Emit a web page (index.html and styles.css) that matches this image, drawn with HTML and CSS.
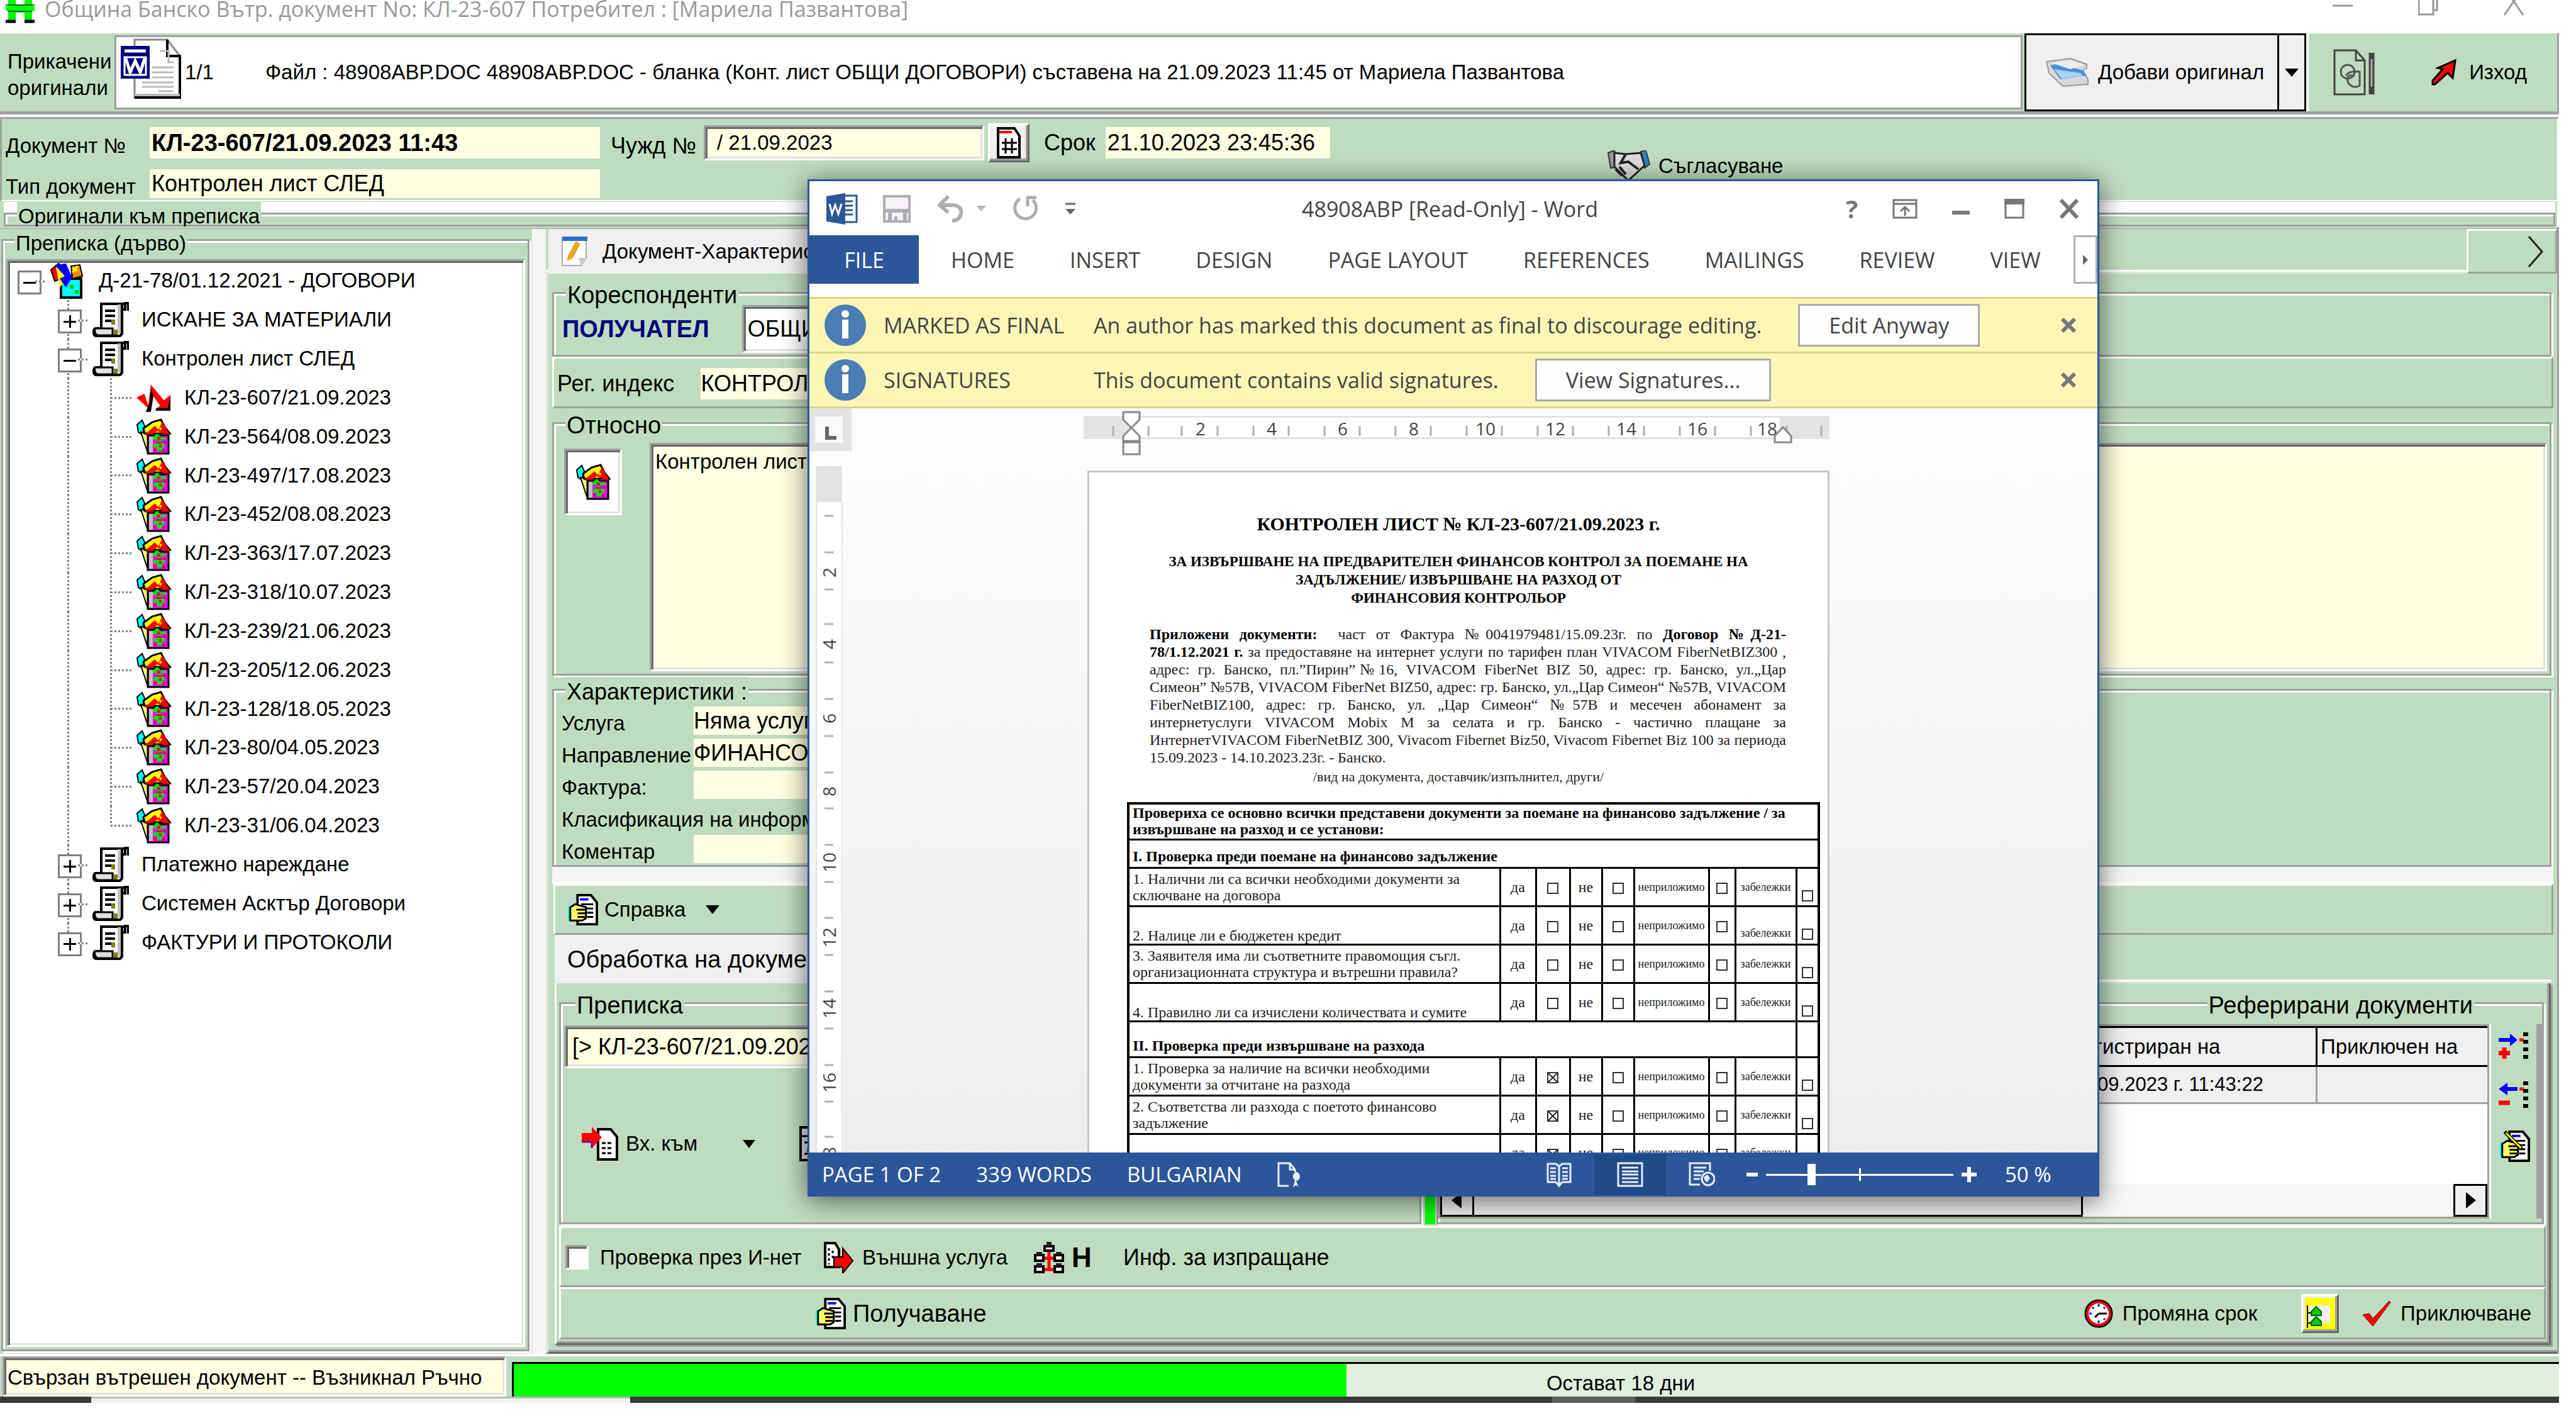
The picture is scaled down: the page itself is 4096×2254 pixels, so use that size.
FILE: index.html
```html
<!DOCTYPE html>
<html lang="bg">
<head>
<meta charset="utf-8">
<title>Община Банско</title>
<link rel="stylesheet" href="styles.css">
</head>
<body>
<svg class="defs" aria-hidden="true">
  <symbol id="scroll" viewBox="0 0 58 56">
    <path d="M14 3H52V12H46V50Q46 54 42 54H6Q2 54 2 48T6 42H14Z" fill="#fff" stroke="#000" stroke-width="4"/>
    <path d="M40 4H46V50H40Z" fill="#c0c0c0"/><path d="M47 4V52M50 2H57V14" fill="none" stroke="#000" stroke-width="4"/>
    <path d="M20 14H36M20 22H36M20 30H30" stroke="#000" stroke-width="4"/><path d="M30 28H36V36H30ZM34 44H40V52H34Z" fill="#808000"/>
    <path d="M4 42H32V53H8Q2 50 4 42Z" fill="#e0e0e0" stroke="#000" stroke-width="3"/>
  </symbol>
  <symbol id="house" viewBox="0 0 56 58">
    <path d="M2 10L10 3L14 12L10 26L4 22Z" fill="#00ffff" stroke="#000" stroke-width="2"/>
    <path d="M8 22L18 52H24V26Z" fill="#ffff80" stroke="#000" stroke-width="2"/>
    <path d="M12 16L26 6L40 2L46 14L54 24H14Z" fill="#ffff00" stroke="#000" stroke-width="3"/>
    <path d="M14 26L30 12L36 18L42 6L54 26H46L34 20L22 28Z" fill="#ff0000"/><path d="M30 10L34 6L36 12ZM38 14L42 16L38 20Z" fill="#ffff00"/>
    <path d="M19 27H52V56H19Z" fill="#ff00ff" stroke="#000" stroke-width="3"/>
    <path d="M21 29H27V54H21Z" fill="#c0c0c0"/><path d="M27 30L34 24L40 30H48V34H40V40H46V46H42V52H34V46H28V40H34V34H27Z" fill="#00e000"/>
    <path d="M34 30H39V35H34ZM33 37H41V40H33ZM37 42H41V46H37ZM42 49H46V53H42ZM44 36H48V40H44ZM28 48H32V52H28Z" fill="#e00040"/>
  </symbol>
  <symbol id="handdoc" viewBox="0 0 52 52">
    <path d="M20 2H40L50 14V50H18V2Z" fill="#fff" stroke="#000" stroke-width="4"/>
    <path d="M22 9H36" stroke="#0000ff" stroke-width="4"/><path d="M24 17H44M24 24H44M34 31H44M34 38H44" stroke="#000" stroke-width="3"/>
    <path d="M2 20V44H5V20Z" fill="#00ffff"/><path d="M6 22L14 17L32 22V40L26 44H6Z" fill="#ffff66" stroke="#000" stroke-width="3"/>
    <path d="M16 26H32M18 32H32M18 38H30" stroke="#000" stroke-width="3"/>
  </symbol>
</svg>

<div class="app">
  <header class="titlebar">
    <svg class="i" width="46" height="38" viewBox="0 0 46 38"><path d="M4 0H16V8H30V0H42V10H46V18H42V34H30V20H16V34H4V18H0V10H4Z" fill="#00ff00"/><path d="M0 8H46M4 18H42" stroke="#063" stroke-width="2"/><path d="M0 34H16M30 34H46" stroke="#000" stroke-width="5"/></svg>
    <h1>Община Банско Вътр. документ No: КЛ-23-607 Потребител : [Мариела Пазвантова]</h1>
    <button class="plain" aria-label="Минимизирай"><svg width="32" height="26" viewBox="0 0 32 26"><path d="M0 9H32" stroke="#999" stroke-width="3"/></svg></button>
    <button class="plain" aria-label="Възстанови"><svg width="32" height="26" viewBox="0 0 32 26"><path d="M1 0V23H24V0M24 16H30V0" fill="none" stroke="#999" stroke-width="3"/></svg></button>
    <button class="plain" aria-label="Затвори"><svg width="32" height="26" viewBox="0 0 32 26"><path d="M1 24L23 -8M31 24L9 -8" stroke="#999" stroke-width="3"/></svg></button>
  </header>

  <div class="toolbar">
    <div class="cap2">Прикачени<br>оригинали</div>
    <div class="filebox">
      <svg width="98" height="98" viewBox="0 0 98 98"><path d="M22 2H74L94 28V94H22Z" fill="#fff" stroke="#888" stroke-width="3"/><path d="M74 2V28H94V94H22" fill="none" stroke="#000" stroke-width="4"/><path d="M22 90H94" stroke="#bbb" stroke-width="4"/><path d="M62 20H76V38H84M50 46H84M50 54H84M50 62H84M34 70H84M34 77H84M60 84H84" stroke="#bbb" stroke-width="3" fill="none"/><path d="M0 12H46V64H0Z" fill="#000080"/><path d="M6 20H40" stroke="#fff" stroke-width="5"/><path d="M6 30H40V58H6Z" fill="none" stroke="#fff" stroke-width="3"/><path d="M8 32L15 54L23 36L31 54L38 32" fill="none" stroke="#fff" stroke-width="5"/></svg>
      <span class="count">1/1</span>
      <span>Файл : 48908АВР.DOC 48908АВР.DOC - бланка (Конт. лист ОБЩИ ДОГОВОРИ) съставена на 21.09.2023 11:45 от Мариела Пазвантова</span>
    </div>
    <div class="split">
      <button class="add"><svg width="70" height="46" viewBox="0 0 70 46"><path d="M2 6L40 1L66 10V16L60 20L68 34V42L28 45L6 24Z" fill="#d8d8d8" stroke="#999" stroke-width="2"/><path d="M8 12L20 9L60 20L66 28L24 34Z" fill="#4a90d9"/><path d="M14 18L56 24L60 29L26 33Z" fill="#a8d0f4"/><path d="M10 8L40 4L62 11L40 18Z" fill="#eee"/></svg>Добави оригинал</button>
      <button class="drop" aria-label="Още"><svg width="22" height="13" viewBox="0 0 22 13"><path d="M0 0H22L11 13Z"/></svg></button>
    </div>
    <div class="exitbox">
      <button class="plain" aria-label="Подпис"><svg width="68" height="74" viewBox="0 0 68 74"><path d="M2 2H36L50 18V72H2Z" fill="none" stroke="#444" stroke-width="3"/><path d="M36 2V18H50" fill="none" stroke="#444" stroke-width="3"/><circle cx="23" cy="36" r="11" fill="none" stroke="#555" stroke-width="3"/><path d="M20 42Q26 34 42 36V58Q32 64 24 54Q20 44 26 42H34" fill="none" stroke="#555" stroke-width="3"/><path d="M61 6V72" stroke="#444" stroke-width="9"/><path d="M61 16V60" stroke="#aaa" stroke-width="3"/></svg></button>
      <button class="plain exit"><svg width="40" height="42" viewBox="0 0 40 42"><path d="M38 2L34 30L26 22L6 40L2 40V34L18 16L10 14Z" fill="#f00" stroke="#000" stroke-width="3"/></svg>Изход</button>
    </div>
  </div>

  <section class="docinfo">
    <div class="inforow">
      <label class="w1 low" for="dn">Документ №</label><input id="dn" class="cream bold dn" value="КЛ-23-607/21.09.2023 11:43">
      <label class="big mid low" for="fn">Чужд №</label><input id="fn" class="cream sunk fn" value="/ 21.09.2023">
      <button class="raised num" aria-label="Номер"><svg width="38" height="50" viewBox="0 0 38 50"><path d="M2 2H28L36 14V48H2Z" fill="#fff" stroke="#000" stroke-width="4"/><path d="M4 8H24" stroke="#f00" stroke-width="4"/><path d="M14 18V42M24 18V42M8 25H32M8 35H32" stroke="#000" stroke-width="3"/></svg></button>
      <label class="big" for="due">Срок</label><input id="due" class="cream big due" value="21.10.2023 23:45:36">
    </div>
    <div class="inforow second">
      <label class="w1 low" for="dt">Тип документ</label><input id="dt" class="cream big dt" value="Контролен лист СЛЕД">
      <button class="plain agree"><svg width="70" height="50" viewBox="0 0 70 50"><path d="M2 4L12 0L20 26L6 28ZM54 2L62 0L68 22L60 28Z" fill="#999" stroke="#333" stroke-width="2"/><path d="M56 4L62 2L67 22L62 24Z" fill="#28c"/><path d="M12 4L30 6L54 4L60 24L34 48L12 26Z" fill="#ddd" stroke="#222" stroke-width="3"/><path d="M30 6L22 20L34 18L50 30M14 30L24 40M20 26L30 38" fill="none" stroke="#222" stroke-width="4"/></svg>Съгласуване</button>
    </div>
  </section>
  <fieldset class="group origs"><legend>Оригинали към преписка</legend></fieldset>

  <main>
    <aside>
      <fieldset class="group treegroup"><legend>Преписка (дърво)</legend>
        <ul class="tree">
          <li><button class="c x first" aria-label="Свий">−</button><span class="c ic"><svg width="58" height="58" viewBox="0 0 58 58"><path d="M18 26H50V56H18Z" fill="#0ff" stroke="#000" stroke-width="4"/><path d="M2 12L14 2L22 8L18 26L8 30Z" fill="#f00" stroke="#000" stroke-width="2"/><path d="M10 8L28 4L30 24L16 40Z" fill="#ff0"/><path d="M34 6L48 4L52 22L36 26Z" fill="#f80" stroke="#000" stroke-width="2"/><path d="M8 4L26 2L34 20H38L26 40L16 26L24 22Z" fill="#00f"/><path d="M32 36H38V42H32ZM40 44H46V50H40Z" fill="#0c0"/><path d="M36 8L44 14M44 6L36 16" stroke="#ff0" stroke-width="3"/></svg></span>Д-21-78/01.12.2021 - ДОГОВОРИ</li>
          <li><span class="c s"></span><button class="c x v" aria-label="Разгъни">+</button><span class="c ic"><svg><use href="#scroll"/></svg></span>ИСКАНЕ ЗА МАТЕРИАЛИ</li>
          <li><span class="c s"></span><button class="c x v" aria-label="Свий">−</button><span class="c ic"><svg><use href="#scroll"/></svg></span>Контролен лист СЛЕД</li>
          <li><span class="c s"></span><span class="c v"></span><span class="c v h"></span><span class="c ic"><svg width="56" height="44" viewBox="0 0 56 44"><path d="M2 22L14 16L20 34L24 2L44 26L54 18V42H30L38 34L28 20L24 42Z" fill="#f00"/><path d="M24 8L28 18L24 44H16L22 30ZM54 20V42H32V38H50Z" fill="#000"/></svg></span>КЛ-23-607/21.09.2023</li>
          <li><span class="c s"></span><span class="c v"></span><span class="c v h"></span><span class="c ic"><svg><use href="#house"/></svg></span>КЛ-23-564/08.09.2023</li>
          <li><span class="c s"></span><span class="c v"></span><span class="c v h"></span><span class="c ic"><svg><use href="#house"/></svg></span>КЛ-23-497/17.08.2023</li>
          <li><span class="c s"></span><span class="c v"></span><span class="c v h"></span><span class="c ic"><svg><use href="#house"/></svg></span>КЛ-23-452/08.08.2023</li>
          <li><span class="c s"></span><span class="c v"></span><span class="c v h"></span><span class="c ic"><svg><use href="#house"/></svg></span>КЛ-23-363/17.07.2023</li>
          <li><span class="c s"></span><span class="c v"></span><span class="c v h"></span><span class="c ic"><svg><use href="#house"/></svg></span>КЛ-23-318/10.07.2023</li>
          <li><span class="c s"></span><span class="c v"></span><span class="c v h"></span><span class="c ic"><svg><use href="#house"/></svg></span>КЛ-23-239/21.06.2023</li>
          <li><span class="c s"></span><span class="c v"></span><span class="c v h"></span><span class="c ic"><svg><use href="#house"/></svg></span>КЛ-23-205/12.06.2023</li>
          <li><span class="c s"></span><span class="c v"></span><span class="c v h"></span><span class="c ic"><svg><use href="#house"/></svg></span>КЛ-23-128/18.05.2023</li>
          <li><span class="c s"></span><span class="c v"></span><span class="c v h"></span><span class="c ic"><svg><use href="#house"/></svg></span>КЛ-23-80/04.05.2023</li>
          <li><span class="c s"></span><span class="c v"></span><span class="c v h"></span><span class="c ic"><svg><use href="#house"/></svg></span>КЛ-23-57/20.04.2023</li>
          <li><span class="c s"></span><span class="c v"></span><span class="c v h end"></span><span class="c ic"><svg><use href="#house"/></svg></span>КЛ-23-31/06.04.2023</li>
          <li><span class="c s"></span><button class="c x v" aria-label="Разгъни">+</button><span class="c ic"><svg><use href="#scroll"/></svg></span>Платежно нареждане</li>
          <li><span class="c s"></span><button class="c x v" aria-label="Разгъни">+</button><span class="c ic"><svg><use href="#scroll"/></svg></span>Системен Асктър Договори</li>
          <li><span class="c s"></span><button class="c x v end" aria-label="Разгъни">+</button><span class="c ic"><svg><use href="#scroll"/></svg></span>ФАКТУРИ И ПРОТОКОЛИ</li>
        </ul>
      </fieldset>
    </aside>

    <div class="right">
      <div class="tabs">
        <button class="tab"><svg width="44" height="48" viewBox="0 0 44 48"><path d="M2 2H40V34L32 46H2Z" fill="#fff" stroke="#aaa" stroke-width="2"/><path d="M2 0H42V7H2Z" fill="#2a6fd0"/><path d="M24 8L30 12L18 34L10 38L12 30Z" fill="#f5a623" stroke="#c80" stroke-width="1"/><path d="M28 34H42L32 46Z" fill="#ccc"/></svg>Документ-Характеристики</button>
        <button class="next" aria-label="Напред"><svg width="26" height="50" viewBox="0 0 26 50"><path d="M2 1L23 25L2 49" fill="none" stroke="#222" stroke-width="3"/></svg></button>
      </div>
      <div class="page">
        <fieldset class="group corr"><legend>Кореспонденти</legend>
          <label class="wide bold navy" for="rc">ПОЛУЧАТЕЛ</label><input id="rc" class="sunk rc" value="ОБЩИНА">
        </fieldset>
        <div class="panel reg"><label class="big" for="rg">Рег. индекс</label><input id="rg" class="cream big rg" value="КОНТРОЛ"></div>
        <fieldset class="group about"><legend>Относно</legend>
          <div class="aboutbox">
            <button class="sunk hb" aria-label="Преписка"><svg width="56" height="58"><use href="#house"/></svg></button>
            <textarea class="cream sunk" aria-label="Относно">Контролен лист</textarea>
          </div>
        </fieldset>
        <fieldset class="group chars"><legend class="big">Характеристики :</legend>
          <div class="fr"><label for="c1">Услуга</label><input id="c1" class="cream big" value="Няма услуга"></div>
          <div class="fr"><label for="c2">Направление</label><input id="c2" class="cream big" value="ФИНАНСОВ"></div>
          <div class="fr"><label for="c3">Фактура:</label><input id="c3" class="cream big"></div>
          <div class="fr"><span>Класификация на информ</span></div>
          <div class="fr"><label for="c5">Коментар</label><input id="c5" class="cream big"></div>
        </fieldset>
        <div class="gapstrip"></div>
        <div class="panel ref"><button class="plain"><svg width="50" height="50"><use href="#handdoc"/></svg>Справка<svg class="ar" width="22" height="14" viewBox="0 0 22 14"><path d="M0 0H22L11 14Z"/></svg></button></div>
        <div class="tabs2"><button class="tab wide">Обработка на документ</button></div>
        <div class="inner">
          <div class="pair">
            <fieldset class="group prep"><legend>Преписка</legend>
              <input class="cream sunk prepin big" aria-label="Преписка" value="[&gt; КЛ-23-607/21.09.2023">
              <div class="prepbar">
                <button class="plain"><svg width="58" height="54" viewBox="0 0 58 54"><path d="M26 4H46L56 16V52H26Z" fill="#fff" stroke="#000" stroke-width="4"/><path d="M32 26H50M32 34H50M32 42H50" stroke="#000" stroke-width="3" stroke-dasharray="6 3"/><path d="M0 10H16V0L32 17L16 34V24H0Z" fill="#f00"/><path d="M0 20V24H16V34" fill="none" stroke="#808" stroke-width="3"/></svg>Вх. към<svg class="ar2" width="20" height="13" viewBox="0 0 20 13"><path d="M0 0H20L10 13Z"/></svg></button>
                <svg width="48" height="56" viewBox="0 0 48 56"><path d="M2 2H46V54H2Z" fill="#ddd" stroke="#000" stroke-width="4"/><path d="M2 16H46M8 26H20M8 44H14V36H20" fill="none" stroke="#000" stroke-width="3"/></svg>
              </div>
            </fieldset>
            <div class="splitter"></div>
            <fieldset class="group refs"><legend>Реферирани документи</legend>
              <div class="refbody">
                <div class="gridbox">
                  <table><thead><tr><th class="g1"></th><th class="g2">Регистриран на</th><th>Приключен на</th></tr></thead>
                  <tbody><tr><td></td><td>21.09.2023 г. 11:43:22</td><td></td></tr></tbody></table>
                  <div class="hscroll"><button aria-label="Наляво"><svg width="18" height="26" viewBox="0 0 18 26"><path d="M16 0V26L0 13Z"/></svg></button><span class="thumb"></span><span class="track"></span><button aria-label="Надясно"><svg width="18" height="26" viewBox="0 0 18 26"><path d="M2 0V26L18 13Z"/></svg></button></div>
                </div>
                <div class="sidebtns">
                  <button class="plain" aria-label="Добави"><svg width="48" height="44" viewBox="0 0 48 44"><path d="M0 9H18V2L30 12L18 22V15H0Z" fill="#00f"/><path d="M33 12H40" stroke="#f00" stroke-width="5"/><path d="M43 0V44" stroke="#000" stroke-width="8" stroke-dasharray="6 6"/><path d="M9 24V42M0 33H18" stroke="#f00" stroke-width="7"/></svg></button>
                  <button class="plain" aria-label="Премахни"><svg width="48" height="44" viewBox="0 0 48 44"><path d="M30 9H14V2L0 12L14 22V15H30Z" fill="#00f"/><path d="M33 12H40" stroke="#f00" stroke-width="5"/><path d="M43 0V44" stroke="#000" stroke-width="8" stroke-dasharray="6 6"/><path d="M0 34H18" stroke="#f00" stroke-width="7"/></svg></button>
                  <button class="plain" aria-label="Редактирай"><svg width="50" height="50" viewBox="0 0 52 52"><use href="#handdoc"/><path d="M10 2L38 30" stroke="#000" stroke-width="6"/><path d="M12 4L37 29" stroke="#ff0" stroke-width="3"/></svg></button>
                </div>
              </div>
            </fieldset>
          </div>
          <div class="panel checks">
            <label class="chk"><input type="checkbox">Проверка през И-нет</label>
            <button class="plain ext"><svg width="48" height="50" viewBox="0 0 48 50"><path d="M2 2H18L24 12V40H2Z" fill="#fff" stroke="#000" stroke-width="4"/><path d="M8 10V36M14 14V30" stroke="#000" stroke-width="3" stroke-dasharray="4 4"/><path d="M16 24H30V10L46 30L30 50V40H16Z" fill="#f00" stroke="#000" stroke-width="2"/></svg>Външна услуга</button>
            <button class="plain net"><svg width="48" height="50" viewBox="0 0 48 50"><path d="M24 14V46M10 26H38M10 44H38" stroke="#f00" stroke-width="5"/><g fill="#fff" stroke="#000" stroke-width="4"><path d="M17 7H31V14H17ZM2 21H15V30H2ZM33 21H46V30H33ZM2 39H15V48H2ZM33 39H46V48H33Z"/></g><path d="M20 0H28V6H20ZM4 16H13V20H4ZM35 16H44V20H35ZM4 34H13V38H4ZM35 34H44V38H35Z" fill="#222"/></svg>Н</button>
            <span class="big">Инф. за изпращане</span>
          </div>
          <div class="panel finish">
            <button class="plain wide recv"><svg width="50" height="52"><use href="#handdoc"/></svg>Получаване</button>
            <button class="plain due2"><svg width="46" height="46" viewBox="0 0 46 46"><circle cx="23" cy="23" r="20" fill="#fff" stroke="#000" stroke-width="5"/><circle cx="23" cy="23" r="18" fill="#fff" stroke="#e00" stroke-width="4"/><path d="M23 23H36M23 23L17 29" stroke="#000" stroke-width="3"/><path d="M23 8V12M23 34V38M8 23H12M13 13L15 15M33 13L31 15M33 33L31 31" stroke="#00f" stroke-width="3"/></svg>Промяна срок</button>
            <button class="raised yel" aria-label="Структура"><svg width="48" height="50" viewBox="0 0 48 50"><path d="M0 0H48V50H0Z" fill="#ff0"/><path d="M6 12H40V40H6Z" fill="#efefef"/><path d="M4 12V48M4 24H14M4 40H14" fill="none" stroke="#000" stroke-width="2"/><path d="M10 22L18 14L26 22V28H10ZM10 38L18 30L26 38V44H10Z" fill="#0c0" stroke="#060" stroke-width="2"/></svg></button>
            <button class="plain fin"><svg width="48" height="40" viewBox="0 0 48 40"><path d="M2 22L12 20L18 28L44 0L46 2L18 40Z" fill="#f00" stroke="#600" stroke-width="1"/></svg>Приключване</button>
          </div>
        </div>
      </div>
    </div>
  </main>

  <footer class="status">
    <div class="msg sunk cream">Свързан вътрешен документ -- Възникнал Ръчно</div>
    <div class="prog"><div class="done"></div><span>Остават 18 дни</span></div>
  </footer>
  <div class="taskbar"><i class="t1"></i><i class="t2"></i></div>
</div>

<section class="word">
  <header class="wtitle">
    <svg width="50" height="50" viewBox="0 0 50 50"><path d="M26 4H48V46H26Z" fill="#fff" stroke="#2b579a" stroke-width="3"/><path d="M30 13H42M30 20H42M30 27H42M30 34H42" stroke="#2b579a" stroke-width="3"/><path d="M0 5L30 0V50L0 45Z" fill="#2b579a"/><path d="M5 17L9 33L14 19L19 33L24 17" fill="none" stroke="#fff" stroke-width="3"/></svg>
    <button class="plain sv" aria-label="Save"><svg width="44" height="44" viewBox="0 0 44 44"><path d="M2 2H42V42H2Z" fill="#f6f2f8" stroke="#b0adb2" stroke-width="4"/><path d="M2 22H42V28H2ZM8 28H14V42H8ZM32 28H38V42H32ZM18 34H23V42H18Z" fill="#b0adb2"/></svg></button>
    <button class="plain un" aria-label="Undo"><svg width="78" height="44" viewBox="0 0 78 44"><path d="M4 16H26Q40 18 38 30Q36 40 24 41M18 2L4 16L18 28" fill="none" stroke="#b0adb2" stroke-width="6"/><path d="M62 17H78L70 26Z" fill="#b8b8b8"/></svg></button>
    <button class="plain re" aria-label="Repeat"><svg width="42" height="44" viewBox="0 0 42 44"><path d="M12 6A17 17 0 1 0 32 8M22 4H38M24 4V18" fill="none" stroke="#b0adb2" stroke-width="5"/></svg></button>
    <button class="plain qa" aria-label="Customize"><svg width="16" height="20" viewBox="0 0 16 20"><path d="M0 2H16" stroke="#666" stroke-width="3"/><path d="M0 10H16L8 19Z" fill="#666"/></svg></button>
    <h2>48908АВР [Read-Only] - Word</h2>
    <div class="wbtns">
      <button class="plain q" aria-label="Help">?</button>
      <button class="plain" aria-label="Ribbon options"><svg width="40" height="32" viewBox="0 0 40 32"><path d="M2 2H38V30H2ZM2 8H38M20 27V14M13 20L20 13L27 20" fill="none" stroke="#777" stroke-width="3"/></svg></button>
      <button class="plain" aria-label="Minimize"><svg width="28" height="32" viewBox="0 0 28 32"><path d="M0 22H28" stroke="#777" stroke-width="6"/></svg></button>
      <button class="plain" aria-label="Maximize"><svg width="32" height="32" viewBox="0 0 32 32"><path d="M2 2H30V30H2Z" fill="none" stroke="#777" stroke-width="3"/><path d="M0 0H32V9H0Z" fill="#777"/></svg></button>
      <button class="plain" aria-label="Close"><svg width="32" height="32" viewBox="0 0 32 32"><path d="M3 2L29 30M29 2L3 30" stroke="#777" stroke-width="6"/></svg></button>
    </div>
  </header>
  <nav class="ribbon">
    <button class="file">FILE</button><button>HOME</button><button>INSERT</button><button>DESIGN</button><button>PAGE LAYOUT</button><button>REFERENCES</button><button>MAILINGS</button><button>REVIEW</button><button class="last">VIEW</button>
    <button class="more" aria-label="More"><svg width="8" height="16" viewBox="0 0 8 16"><path d="M0 0L8 8L0 16Z" fill="#666"/></svg></button>
  </nav>
  <div class="bar"><svg width="66" height="66" viewBox="0 0 66 66"><circle cx="33" cy="33" r="33" fill="#4a7eb5"/><circle cx="33" cy="15" r="6" fill="#fff"/><path d="M33 24V54" stroke="#fff" stroke-width="10"/></svg><b>MARKED AS FINAL</b><span>An author has marked this document as final to discourage editing.</span><button class="wb">Edit Anyway</button><button class="plain xx" aria-label="Close"><svg width="24" height="24" viewBox="0 0 24 24"><path d="M2 2L22 22M22 2L2 22" stroke="#777" stroke-width="6"/></svg></button></div>
  <div class="bar"><svg width="66" height="66" viewBox="0 0 66 66"><circle cx="33" cy="33" r="33" fill="#4a7eb5"/><circle cx="33" cy="15" r="6" fill="#fff"/><path d="M33 24V54" stroke="#fff" stroke-width="10"/></svg><b>SIGNATURES</b><span>This document contains valid signatures.</span><button class="wb">View Signatures...</button><button class="plain xx" aria-label="Close"><svg width="24" height="24" viewBox="0 0 24 24"><path d="M2 2L22 22M22 2L2 22" stroke="#777" stroke-width="6"/></svg></button></div>
  <div class="canvas">
    <div class="vcol">
      <button class="tabsel" aria-label="Tab"><svg width="44" height="42" viewBox="0 0 44 42"><path d="M0 0H44V42H0Z" fill="#fafafa"/><path d="M19 16V34H34" fill="none" stroke="#666" stroke-width="6"/></svg></button>
      <svg class="vr" width="44" height="1092" viewBox="0 0 44 1092"><path d="M0 0H44V1092H0Z" fill="#fff"/><path d="M0 0H42V57H0Z" fill="#e3e3e3"/><path d="M1 57V1092M42 57V1092" stroke="#e3e3e3" stroke-width="2"/>
        <path d="M14 79H28M14 137H28M14 196H28M14 251H28M14 312H28M14 370H28M14 429H28M14 487H28M14 544H28M14 602H28M14 661H28M14 718H28M14 777H28M14 835H28M14 894H28M14 952H28M14 1010H28M14 1066H28" stroke="#b0b0b0" stroke-width="3"/>
        <g font-size="28" font-family="Open Sans, sans-serif" fill="#444" text-anchor="middle"><text transform="translate(32 169) rotate(-90)">2</text><text transform="translate(32 283) rotate(-90)">4</text><text transform="translate(32 401) rotate(-90)">6</text><text transform="translate(32 517) rotate(-90)">8</text><text transform="translate(32 630) rotate(-90)">10</text><text transform="translate(32 749) rotate(-90)">12</text><text transform="translate(32 862) rotate(-90)">14</text><text transform="translate(32 980) rotate(-90)">16</text><text transform="translate(32 1098) rotate(-90)">18</text></g></svg>
    </div>
    <div class="dcol">
      <svg class="hr" width="1186" height="80" viewBox="0 0 1186 80"><path d="M0 8H1186V45H0Z" fill="#e3e3e3"/><path d="M76 11H1107V42H76Z" fill="#fff"/>
        <path d="M47 24V40M103 24V40M156 24V40M213 24V40M270 24V40M326 24V40M383 24V40M439 24V40M496 24V40M552 24V40M609 24V40M665 24V40M722 24V40M778 24V40M835 24V40M891 24V40M948 24V40M1004 24V40M1061 24V40M1118 24V40M1173 24V40" stroke="#b0b0b0" stroke-width="3"/>
        <g font-size="28" font-family="Open Sans, sans-serif" fill="#444" text-anchor="middle"><text x="186" y="39">2</text><text x="299" y="39">4</text><text x="412" y="39">6</text><text x="525" y="39">8</text><text x="639" y="39">10</text><text x="750" y="39">12</text><text x="863" y="39">14</text><text x="976" y="39">16</text><text x="1087" y="39">18</text></g>
        <path d="M63 2H89V14L76 27L63 14ZM76 27L89 40V48H63V40ZM63 50H89V69H63ZM1112 26L1125 40V50H1099V40Z" fill="#fff" stroke="#888" stroke-width="3"/></svg>
      <article class="paper">
        <h3>КОНТРОЛЕН ЛИСТ № КЛ-23-607/21.09.2023 г.</h3>
        <h4>ЗА ИЗВЪРШВАНЕ НА ПРЕДВАРИТЕЛЕН ФИНАНСОВ КОНТРОЛ ЗА ПОЕМАНЕ НА<br>ЗАДЪЛЖЕНИЕ/ ИЗВЪРШВАНЕ НА РАЗХОД ОТ<br>ФИНАНСОВИЯ КОНТРОЛЬОР</h4>
        <div class="para">
          <p><b>Приложени документи:</b>&nbsp; част от Фактура №0041979481/15.09.23г. по <b>Договор №Д-21-</b></p>
          <p><b>78/1.12.2021 г.</b> за предоставяне на интернет услуги по тарифен план VIVACOM FiberNetBIZ300 ,</p>
          <p>адрес: гр. Банско, пл.”Пирин”№16, VIVACOM FiberNet BIZ 50, адрес: гр. Банско, ул.„Цар</p>
          <p>Симеон” №57В, VIVACOM FiberNet BIZ50, адрес: гр. Банско, ул.„Цар Симеон“ №57В, VIVACOM</p>
          <p>FiberNetBIZ100, адрес: гр. Банско, ул. „Цар Симеон“ №57В и месечен абонамент за</p>
          <p>интернетуслуги VIVACOM Mobix M за селата и гр. Банско - частично плащане за</p>
          <p>ИнтернетVIVACOM FiberNetBIZ 300, Vivacom Fibernet Biz50, Vivacom Fibernet Biz 100 за периода</p>
          <p class="lastl">15.09.2023 - 14.10.2023.23г. - Банско.</p>
        </div>
        <p class="note">/вид на документа, доставчик/изпълнител, други/</p>
        <table class="ct">
          <colgroup><col class="k0"><col class="k1"><col class="k2"><col class="k3"><col class="k3"><col class="k4"><col class="k5"><col class="k6"><col class="k7"></colgroup>
          <tr class="r59"><th colspan="9">Провериха се основно всички представени документи за поемане на финансово задължение / за<br>извършване на разход и се установи:</th></tr>
          <tr class="r46"><th colspan="9" class="bot">I. Проверка преди поемане на финансово задължение</th></tr>
          <tr><td>1. Налични ли са всички необходими документи за<br>сключване на договора</td><td>да</td><td><input type="checkbox" aria-label="да"></td><td>не</td><td><input type="checkbox" aria-label="не"></td><td class="sm">неприложимо</td><td><input type="checkbox" aria-label="неприложимо"></td><td class="sm">забележки</td><td class="bot"><input type="checkbox" aria-label="забележки"></td></tr>
          <tr><td class="bot">2. Налице ли е бюджетен кредит</td><td>да</td><td><input type="checkbox" aria-label="да"></td><td>не</td><td><input type="checkbox" aria-label="не"></td><td class="sm">неприложимо</td><td><input type="checkbox" aria-label="неприложимо"></td><td class="sm bot">забележки</td><td class="bot"><input type="checkbox" aria-label="забележки"></td></tr>
          <tr><td>3. Заявителя има ли съответните правомощия съгл.<br>организационната структура и вътрешни правила?</td><td>да</td><td><input type="checkbox" aria-label="да"></td><td>не</td><td><input type="checkbox" aria-label="не"></td><td class="sm">неприложимо</td><td><input type="checkbox" aria-label="неприложимо"></td><td class="sm">забележки</td><td class="bot"><input type="checkbox" aria-label="забележки"></td></tr>
          <tr><td class="bot">4. Правилно ли са изчислени количествата и сумите</td><td>да</td><td><input type="checkbox" aria-label="да"></td><td>не</td><td><input type="checkbox" aria-label="не"></td><td class="sm">неприложимо</td><td><input type="checkbox" aria-label="неприложимо"></td><td class="sm">забележки</td><td class="bot"><input type="checkbox" aria-label="забележки"></td></tr>
          <tr class="r57"><th colspan="8" class="bot">II. Проверка преди извършване на разхода</th><td></td></tr>
          <tr><td>1. Проверка за наличие на всички необходими<br>документи за отчитане на разхода</td><td>да</td><td><input type="checkbox" checked aria-label="да"></td><td>не</td><td><input type="checkbox" aria-label="не"></td><td class="sm">неприложимо</td><td><input type="checkbox" aria-label="неприложимо"></td><td class="sm">забележки</td><td class="bot"><input type="checkbox" aria-label="забележки"></td></tr>
          <tr><td>2. Съответства ли разхода с поетото финансово<br>задължение</td><td>да</td><td><input type="checkbox" checked aria-label="да"></td><td>не</td><td><input type="checkbox" aria-label="не"></td><td class="sm">неприложимо</td><td><input type="checkbox" aria-label="неприложимо"></td><td class="sm">забележки</td><td class="bot"><input type="checkbox" aria-label="забележки"></td></tr>
          <tr><td></td><td>да</td><td><input type="checkbox" checked aria-label="да"></td><td>не</td><td><input type="checkbox" aria-label="не"></td><td class="sm">неприложимо</td><td><input type="checkbox" aria-label="неприложимо"></td><td class="sm">забележки</td><td></td></tr>
        </table>
      </article>
    </div>
  </div>
  <footer class="wstatus">
    <span>PAGE 1 OF 2</span><span>339 WORDS</span><span>BULGARIAN</span>
    <svg width="38" height="40" viewBox="0 0 38 40"><path d="M18 38H2V2H20L28 12V16M20 2V12H28" fill="none" stroke="#e4ecf7" stroke-width="3"/><path d="M30 16A6 7 0 0 1 30 30L34 40L30 37L25 40L28 29A6 7 0 0 1 30 16Z" fill="#e4ecf7"/></svg>
    <div class="views">
      <button class="plain" aria-label="Read mode"><svg width="40" height="40" viewBox="0 0 40 40"><path d="M2 3H15L20 7L25 3H38V32H25L20 38L15 32H2ZM20 7V36" fill="none" stroke="#e4ecf7" stroke-width="3"/><path d="M6 10H15M6 16H15M6 22H15M6 27H15M25 10H34M25 16H34M25 22H34M25 27H34" stroke="#e4ecf7" stroke-width="3"/></svg></button>
      <button class="plain on" aria-label="Print layout"><svg width="42" height="40" viewBox="0 0 42 40"><path d="M2 2H40V38H2ZM8 9H34M8 15H34M8 20H34M8 26H34M8 32H34" fill="none" stroke="#e4ecf7" stroke-width="3"/></svg></button>
      <button class="plain" aria-label="Web layout"><svg width="42" height="40" viewBox="0 0 42 40"><path d="M18 36H2V2H34V14M8 9H28M8 15H24M8 21H20M8 27H18" fill="none" stroke="#e4ecf7" stroke-width="3"/><circle cx="31" cy="27" r="10" fill="#2b579a" stroke="#e4ecf7" stroke-width="3"/><path d="M24 24L30 20L34 26L30 32L26 30Z" fill="#e4ecf7"/></svg></button>
    </div>
    <button class="plain zo" aria-label="Zoom out"><svg width="18" height="24" viewBox="0 0 18 24"><path d="M0 12H18" stroke="#fff" stroke-width="6"/></svg></button>
    <input type="range" class="zoom" aria-label="Zoom" value="23">
    <button class="plain zi" aria-label="Zoom in"><svg width="24" height="24" viewBox="0 0 24 24"><path d="M0 12H24M12 0V24" stroke="#fff" stroke-width="6"/></svg></button>
    <span>50 %</span>
  </footer>
</section>
</body>
</html>
```

FILE: styles.css
```css
* { box-sizing: border-box; }
body { margin: 0; min-height: 100vh; background: #fff; color: #000; font: 33px/36px "Liberation Sans", sans-serif; display: flex; position: relative; }
.defs { position: absolute; width: 0; height: 0; }
svg { display: block; flex: none; }
button, input, textarea { font: inherit; color: inherit; margin: 0; border-radius: 0; }
input, textarea { border: 0; padding: 0 3px; min-width: 0; outline: 0; }
.plain { border: 0; padding: 0; background: none; display: flex; align-items: center; white-space: nowrap; }
.big { font-size: 36px; }
.wide { font-size: 38px; }
.bold { font-weight: bold; }
.navy { color: #000080; }
.cream { background: #ffffe1; }
.sunk { border: 3px solid; border-color: #a0a0a0 #fff #fff #a0a0a0; box-shadow: inset 3px 3px #696969, inset -3px -3px #e3e3e3; }
.raised { background: #f0f0f0; border: 3px solid; border-color: #fff #696969 #696969 #fff; box-shadow: inset -3px -3px #a0a0a0; padding: 0; display: flex; align-items: center; justify-content: center; }
.app { flex: 1; min-width: 0; display: flex; flex-direction: column; padding: 0 27px 24px 0; }

.titlebar { height: 53px; display: flex; align-items: flex-start; padding-left: 9px; }
.titlebar h1 { margin: 0 auto 0 16px; font: 34px/28px "Open Sans", sans-serif; color: #999; white-space: nowrap; }
.titlebar .plain { margin-right: 56px; width: 80px; justify-content: flex-end; }

.toolbar { height: 129px; background: #c0dcc0; border-bottom: 5px solid #a0a0a0; display: flex; }
.cap2 { width: 182px; padding: 24px 0 0 12px; line-height: 42px; }
.filebox { flex: 1; margin: 3px 3px 3px 0; border: 3px solid #a0a0a0; background: #fff; display: flex; align-items: center; padding-left: 7px; white-space: nowrap; overflow: hidden; }
.filebox svg { margin-bottom: 10px; }
.filebox .count { width: 132px; padding-left: 4px; }
.split { width: 448px; border: 3px solid #000; background: #f0f0f0; display: flex; }
.split button { border: 0; background: none; padding: 0; display: flex; align-items: center; }
.split .add { flex: 1; padding-left: 30px; gap: 14px; white-space: nowrap; }
.split .drop { width: 43px; border-left: 3px solid #000; justify-content: center; }
.exitbox { width: 402px; border-right: 3px solid #a0a0a0; border-left: 4px solid #fff; display: flex; align-items: center; justify-content: space-between; padding: 0 48px 0 39px; }
.exit { gap: 20px; }

.docinfo { margin-top: 4px; border: 3px solid; border-color: #a0a0a0 transparent #fff #a0a0a0; background: #c0dcc0; background-clip: padding-box; height: 135px; padding-top: 6px; }
.inforow { display: flex; align-items: center; height: 64px; padding-left: 6px; }
.second { height: 58px; padding-top: 8px; }
.w1 { width: 229px; }
.low { padding-top: 10px; white-space: nowrap; }
.dn { width: 716px; height: 50px; font-size: 38px; }
.dt { width: 716px; height: 46px; }
.mid { width: 165px; padding-left: 17px; }
.fn { width: 446px; height: 56px; padding-left: 18px; }
.num { width: 66px; height: 62px; margin: 0 23px 0 6px; }
.due { width: 357px; height: 50px; margin-left: 16px; }
.agree { margin-left: 1601px; gap: 12px; margin-top: -56px; }

.group { min-width: 0; margin: 0; padding: 0; border: 3px solid #a0a0a0; box-shadow: 3px 3px #fff, inset 3px 3px #fff; background: #c0dcc0; }
.group legend { background: #c0dcc0; padding: 0 2px; margin-left: 18px; }
.origs { height: 37px; margin: 0 6px 3px 6px; }
.origs legend { height: 36px; line-height: 46px; }
.app > .origs { outline: 6px solid #c0dcc0; outline-offset: 0; clip-path: inset(-1px -3px -3px -6px); }

main { flex: 1; display: flex; border-top: 3px solid #a0a0a0; background: #f5f5f5; }
aside { width: 846px; background: #c0dcc0; padding: 0 4px 4px 2px; display: flex; }
.treegroup { flex: 1; display: flex; padding: 14px 4px 4px 5px; }
.treegroup legend { height: 34px; line-height: 46px; margin-left: 13px; }
.tree { list-style: none; margin: 0; padding: 0; flex: 1; background: #fff; border: 3px solid; border-color: #a0a0a0 #fff #fff #a0a0a0; box-shadow: inset 3px 3px #696969, inset -3px -3px #e3e3e3; }
.tree li { height: 62px; display: flex; align-items: center; white-space: nowrap; }
.tree li:nth-child(6n) { height: 61px; }
.c { width: 68px; height: 100%; flex: none; border: 0; padding: 0; display: flex; align-items: center; justify-content: center; background: none; }
.c.s, .c.first { width: 61px; }
.v { background: repeating-linear-gradient(#808080 0 3px, #fff 3px 6px) center / 3px 100% no-repeat; }
.v.h { background: repeating-linear-gradient(90deg, #808080 0 3px, #fff 3px 6px) right / 34px 3px no-repeat, repeating-linear-gradient(#808080 0 3px, #fff 3px 6px) center / 3px 100% no-repeat; }
.v.end { background-size: 3px 50%; background-position: top; }
.v.h.end { background-size: 34px 3px, 3px 50%; background-position: right, top; }
.x { position: relative; color: transparent; }
.x::before { content: ""; position: absolute; width: 32px; height: 32px; border: 3px solid #808080; left: calc(50% - 16px); top: calc(50% - 16px); }
.x::after { content: ""; position: absolute; width: 18px; height: 3px; background: repeating-linear-gradient(90deg, #808080 0 3px, #fff 3px 6px); right: 0; top: 50%; }
.x[aria-label="Свий"]::before { background: linear-gradient(#000, #000) center / 20px 3px no-repeat #fff; }
.x[aria-label="Разгъни"]::before { background: linear-gradient(#000, #000) center / 20px 3px no-repeat, linear-gradient(#000, #000) center / 3px 20px no-repeat #fff; }
.ic { margin-right: 15px; }
.ic svg { width: 58px; height: 58px; }

.right { flex: 1; min-width: 0; margin-left: 22px; display: flex; flex-direction: column; background: #c0dcc0; border-right: 3px solid #a0a0a0; }
.tabs { height: 71px; display: flex; justify-content: space-between; background: linear-gradient(#c0dcc0 65px, #fff 65px 68px, #e3e3e3 68px); }
.tab { border: 0; background: #f0f0f0; text-align: left; padding: 0 0 0 20px; width: 700px; margin-left: 4px; display: flex; align-items: center; gap: 22px; white-space: nowrap; }
.next { width: 144px; background: #c0dcc0; border: 3px solid; border-color: #fff #a0a0a0 #a0a0a0 #fff; padding: 0 18px 0 0; display: flex; align-items: center; justify-content: flex-end; }
.page { flex: 1; display: flex; flex-direction: column; padding: 10px 9px 6px 6px; border-left: 4px solid #e3e3e3; background: #c0dcc0; border-bottom: 3px solid #696969; box-shadow: inset 0 -3px #a0a0a0; }
.page legend { height: 40px; line-height: 48px; font-size: 38px; }
.page legend.big { font-size: 36px; }
.corr { height: 122px; display: flex; align-items: center; padding: 0 0 0 13px; }
.corr legend, .chars legend { margin-left: 6px; }
.rc { margin-left: 52px; width: 900px; height: 76px; padding-left: 6px; font-size: 36px; }
.panel { border: 3px solid; border-color: #fff #a0a0a0 #a0a0a0 #fff; background: #c0dcc0; display: flex; align-items: center; }
.reg { height: 82px; margin: 0 -3px 0 0; padding: 4px 0 0 5px; }
.rg { margin-left: 42px; width: 600px; height: 50px; padding: 0; }
.about { height: 422px; margin-top: 3px; }
.aboutbox { display: flex; height: 100%; padding: 12px 4px 3px 0; align-items: flex-start; }
.hb { width: 92px; height: 106px; margin: 9px 44px 0 16px; padding: 0; background: #fff; display: flex; align-items: center; justify-content: center; flex: none; }
.about textarea { flex: 1; height: 363px; resize: none; padding: 9px 6px; }
.chars { height: 302px; margin-top: 2px; padding: 4px 0 0 12px; }
.fr { height: 51px; display: flex; align-items: center; white-space: nowrap; }
.fr label { width: 210px; padding-top: 8px; }
.fr input { width: 900px; height: 45px; padding: 0; }
.fr span { padding-top: 8px; }
.gapstrip { height: 27px; margin: 0 -3px 0 0; background: #f5f5f5; border-bottom: 3px solid #fff; }
.ref { height: 81px; margin: 0 -3px 0 2px; padding-left: 18px; }
.ref svg:first-child { margin-right: 10px; }
.ar { margin-left: 32px; }
.tabs2 { height: 77px; display: flex; margin-left: 4px; background: linear-gradient(#c0dcc0 71px, #fff 71px 74px, #e3e3e3 74px); }
.tabs2 .tab { margin: 0; }
.inner { flex: 1; margin: 0 1px 5px 4px; padding: 11px 8px 6px 4px; border: 3px solid; border-color: transparent #696969 #696969 #fff; border-top: 0; box-shadow: 3px 3px #a0a0a0, inset -3px -3px #a0a0a0; display: flex; flex-direction: column; }
.pair { flex: 1; display: flex; min-height: 367px; }
.prep { width: 1371px; padding: 16px 0 0 5px; }
.prepin { width: 100%; height: 68px; padding: 0 10px; }
.prepbar { display: flex; align-items: center; justify-content: flex-start; padding: 92px 0 0 28px; }
.prepbar .plain > svg:first-child { margin-right: 12px; }
.ar2 { margin: 0 70px 0 72px; }
.splitter { width: 16px; margin: 20px 2px 0 6px; background: #00ff00; }
.refs { flex: 1; }
.refs legend { margin-left: auto; margin-right: 108px; }
.refbody { display: flex; height: 100%; padding: 14px 0 6px; }
.gridbox { flex: 1; display: flex; flex-direction: column; background: #fff; border: 3px solid #a0a0a0; }
.gridbox table { border-collapse: collapse; width: 100%; table-layout: fixed; border-top: 3px solid #000; }
.gridbox th, .gridbox td { height: 59px; padding: 0 5px; font-weight: normal; text-align: left; background: #f0f0f0; border: 3px solid #a0a0a0; border-width: 0 0 3px 3px; white-space: nowrap; }
.gridbox td { font-size: 31px; }
.gridbox th { border-color: #000; height: 62px; }
.gridbox .g1 { width: 994px; }
.gridbox .g2 { width: 398px; }
.hscroll { margin-top: auto; height: 52px; display: flex; background: #f7f7f7; }
.hscroll button { width: 54px; border: 3px solid #000; background: #f0f0f0; padding: 0; display: flex; align-items: center; justify-content: center; }
.thumb { width: 968px; background: #f0f0f0; border: 3px solid #000; border-left: 0; }
.track { flex: 1; }
.sidebtns { width: 84px; border-right: 9px solid #a0a0a0; border-left: 3px solid #fff; display: flex; flex-direction: column; gap: 34px; padding: 13px 0 0 12px; }
.checks { height: 98px; margin: 2px -3px 0 0; padding: 2px 0 0 7px; border-top-width: 4px; }
.chk { display: flex; align-items: center; width: 411px; white-space: nowrap; }
.chk input { appearance: none; width: 37px; height: 39px; padding: 0; margin-right: 18px; background: #fff; border: 3px solid; border-color: #a0a0a0 #fff #fff #a0a0a0; box-shadow: inset 3px 3px #696969; }
.ext { width: 334px; gap: 13px; }
.net { width: 142px; gap: 12px; font-weight: bold; font-size: 44px; }
.finish { height: 83px; margin-right: -3px; padding: 0 20px 0 403px; }
.recv { margin-right: auto; gap: 11px; }
.due2 { gap: 15px; margin-right: 70px; }
.yel { width: 60px; height: 62px; margin-right: 36px; }
.fin { gap: 14px; }

.status { height: 64px; margin-top: 4px; display: flex; background: #c0dcc0; }
.msg { width: 801px; margin-left: 4px; padding: 0 5px; line-height: 62px; white-space: nowrap; }
.prog { flex: 1; margin: 9px 0 0 9px; border: 3px solid #000; border-width: 3px 0 0 3px; background: #dfeedf; display: grid; align-items: center; justify-items: center; }
.prog > * { grid-area: 1 / 1; }
.done { background: #00ff00; width: 1324px; height: 100%; justify-self: start; }
.prog span { margin-left: 268px; line-height: 46px; padding-top: 8px; }
.taskbar { height: 10px; background: #3a3a3a; display: flex; padding-left: 145px; }
.t1 { width: 857px; background: #f2f2f2; border-top: 3px solid #bbb; }
.t2 { width: 132px; margin-left: 1466px; background: #5d5d5d; }

.word { position: absolute; left: 1284px; top: 285px; width: 2054px; height: 1617px; border: 3px solid #2b579a; border-bottom: 0; background: #fff; color: #444; font: 34px/40px "Open Sans", sans-serif; display: flex; flex-direction: column; box-shadow: 0 6px 40px rgba(0, 0, 0, .6); }
.wtitle { height: 86px; display: flex; align-items: center; padding: 2px 29px 0 27px; flex: none; }
.sv { margin-left: 40px; }
.un, .re, .qa { margin-left: 42px; }
.wtitle h2 { margin: 0 auto 0 360px; font: inherit; white-space: nowrap; }
.wbtns { display: flex; align-items: center; gap: 55px; }
.q { font-weight: bold; font-size: 40px; color: #777; }
.ribbon { display: flex; height: 77px; margin-bottom: 21px; flex: none; }
.ribbon button { flex: none; border: 0; background: none; padding: 0; margin-right: 88px; white-space: nowrap; }
.ribbon .file { width: 174px; background: #2b579a; color: #fff; margin-right: 51px; }
.ribbon .last { margin-right: 0; }
.ribbon .more { margin: 0 0 0 auto; width: 38px; border: 3px solid #b0b0b0; background: #fdfdfd; display: flex; align-items: center; justify-content: center; }
.bar { height: 87px; flex: none; background: #fcf7b6; border-top: 3px solid #d8d68a; display: flex; align-items: center; padding: 0 34px 0 24px; }
.bar b { font-weight: normal; width: 332px; padding-left: 28px; white-space: nowrap; }
.bar span { white-space: nowrap; margin-right: 58px; padding-left: 30px; }
.wb { height: 68px; padding: 0 46px; border: 3px solid #ababab; background: #fdfdfd; white-space: nowrap; }
.xx { margin-left: auto; }
.canvas { flex: 1; min-height: 0; overflow: hidden; display: flex; background: linear-gradient(#fdfdfd, #eee); border-top: 3px solid #d8d68a; }
.vcol { width: 67px; }
.tabsel { width: 67px; height: 68px; border: 0; padding: 0 0 0 9px; background: #e3e3e3; display: flex; align-items: center; }
.vr { margin: 24px 0 0 10px; }
.hr { margin: 4px 0 0 369px; }
.dcol { flex: 1; }
.paper { margin: 15px 0 0 375px; width: 1180px; background: #fff; border: 3px solid #c6c6c6; border-bottom: 0; color: #222; font: 24px/28px "Liberation Serif", serif; padding: 62px 16px 0 60px; height: 1300px; }
.paper h3 { margin: 0 0 25px -44px; text-align: center; font: bold 30px/40px "Liberation Serif", serif; color: #000; }
.paper h4 { margin: 0 0 29px -44px; text-align: center; font: bold 23px/29px "Liberation Serif", serif; color: #000; }
.para { margin: 0 50px 0 36px; }
.para p { margin: 0; text-align: justify; text-align-last: justify; white-space: nowrap; }
.para .lastl { text-align-last: left; }
.para b { color: #000; }
.note { margin: 3px 0 26px -44px; text-align: center; font-size: 22px; }
.ct { border-collapse: collapse; table-layout: fixed; width: 1098px; border: 4px solid #000; line-height: 26px; }
.ct tr { height: 61px; }
.ct .r59 { height: 57px; }
.ct .r46 { height: 45px; }
.ct .r57 { height: 57px; }
.ct th, .ct td { border: 3px solid #000; padding: 0; text-align: center; vertical-align: middle; white-space: nowrap; }
.ct th { text-align: left; padding: 0 5px; color: #000; vertical-align: top; }
.ct td:first-child { text-align: left; padding: 0 5px; }
.ct .sm { font-size: 18px; }
.ct .bot { vertical-align: bottom; padding-bottom: 4px; }
.k0 { width: 591px; } .k1 { width: 57px; } .k2 { width: 54px; } .k3 { width: 51px; } .k4 { width: 119px; } .k5 { width: 42px; } .k6 { width: 97px; } .k7 { width: 36px; }
.ct input { appearance: none; width: 18px; height: 18px; padding: 0; border: 2px solid #333; display: inline-block; vertical-align: middle; }
.ct input:checked { background: linear-gradient(45deg, transparent 44%, #333 44% 56%, transparent 56%), linear-gradient(-45deg, transparent 44%, #333 44% 56%, transparent 56%); }
.wstatus { height: 70px; flex: none; background: #2b579a; color: #fff; display: flex; align-items: center; padding-left: 20px; gap: 56px; white-space: nowrap; font-size: 33px; }
.views { margin-left: auto; display: flex; align-items: stretch; height: 64px; }
.views button { padding: 0 36px; }
.views .on { background: #1e4a87; }
.wstatus > span:last-child { width: 147px; margin-left: -11px; }
.zo { margin-left: -42px; }
.zoom { appearance: none; width: 298px; height: 36px; margin: 0 -43px; padding: 0; background: linear-gradient(#fff, #fff) center / 100% 3px no-repeat, linear-gradient(#fff, #fff) center / 3px 20px no-repeat; }
.zoom::-webkit-slider-thumb { appearance: none; width: 13px; height: 34px; background: #fff; }
```
